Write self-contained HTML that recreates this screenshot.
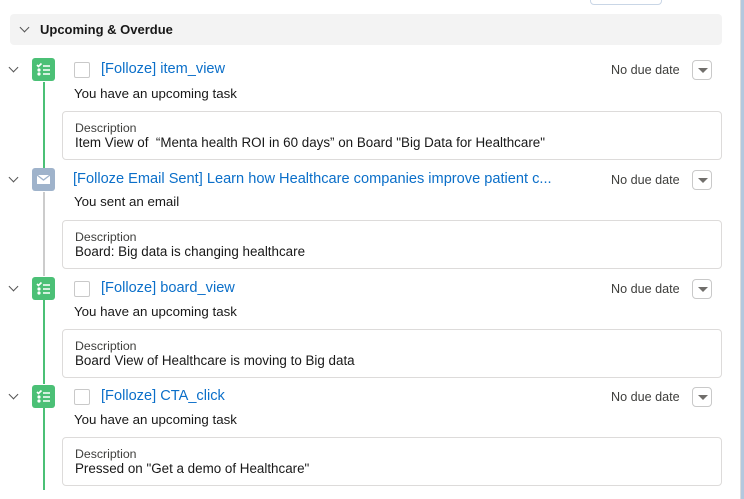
<!DOCTYPE html>
<html><head><style>
*{margin:0;padding:0;box-sizing:border-box}
body{width:744px;height:499px;background:#fff;font-family:"Liberation Sans",sans-serif;color:#181818;position:relative;overflow:hidden}
.a{position:absolute}
.hdr{left:10px;top:14px;width:712px;height:31px;background:#f3f3f3;border-radius:4px}
.hdr span{position:absolute;left:30px;top:8px;font-size:13px;font-weight:bold;color:#181818}
.chev{width:7px;height:7px;border-right:1.5px solid #555;border-bottom:1.5px solid #555;transform:rotate(45deg)}
.ico{width:23px;height:23px;border-radius:3px}
.g{background:#4bc076}.b{background:#9fb3cb}
.cb{width:16px;height:16px;border:1px solid #c9c9c9;border-radius:2px;background:#fff}
.t{font-size:14.6px;color:#0b6fc9;white-space:nowrap}
.nd{font-size:12.6px;color:#3e3e3c}
.dd{width:20px;height:20px;border:1px solid #c9c9c9;border-radius:4px;background:#fff}
.dd:after{content:"";position:absolute;left:5px;top:7px;border-left:5px solid transparent;border-right:5px solid transparent;border-top:5px solid #706e6b}
.s{font-size:13.3px;color:#181818}
.box{left:62px;width:660px;height:49px;border:1px solid #dddbda;border-radius:4px}
.box .l{position:absolute;left:12px;top:9px;font-size:12.3px;color:#3e3e3c}
.box .v{position:absolute;left:12px;top:23px;font-size:13.4px;color:#181818;white-space:nowrap}
.ln{width:2px}
</style></head><body>
<div class="a" style="left:590px;top:-6px;width:72px;height:11px;border:1px solid #c9d6e6;border-radius:4px"></div>
<div class="a" style="left:740px;top:0;width:1px;height:499px;background:#ddd"></div>
<div class="a" style="left:741px;top:0;width:3px;height:499px;background:#b4c8de"></div>
<div class="a hdr"><div class="a chev" style="left:11px;top:10px"></div><span>Upcoming &amp; Overdue</span></div>

<div class="a ln" style="left:43px;top:82px;height:86px;background:#4bc076"></div>
<div class="a ln" style="left:43px;top:192px;height:84px;background:#ccc"></div>
<div class="a ln" style="left:43px;top:300px;height:84px;background:#4bc076"></div>
<div class="a ln" style="left:43px;top:408px;height:82px;background:#4bc076"></div>

<div class="a chev" style="left:10px;top:64px"></div>
<div class="a ico g" style="left:32px;top:58px"><svg width="23" height="23"><g stroke="#fff" stroke-width="1.6" fill="none"><path d="M5 7l1.5 1.5 3-3"/><path d="M11 8h7M11 12h7M11 16h7"/><circle cx="7" cy="12" r=".8"/><circle cx="7" cy="16" r=".8"/></g></svg></div>
<div class="a cb" style="left:74px;top:62px"></div>
<div class="a t" style="left:101px;top:61px">[Folloze] item_view</div>
<div class="a nd" style="left:611px;top:63px">No due date</div>
<div class="a dd" style="left:692px;top:60px"></div>
<div class="a s" style="left:74px;top:86px">You have an upcoming task</div>
<div class="a box" style="top:111px"><div class="l">Description</div><div class="v">Item View of &nbsp;“Menta health ROI in 60 days” on Board "Big Data for Healthcare"</div></div>

<div class="a chev" style="left:10px;top:174px"></div>
<div class="a ico b" style="left:32px;top:168px"><svg width="23" height="23"><rect x="5" y="7" width="13" height="9" fill="#fff"/><path d="M5 7l6.5 5 6.5-5" stroke="#9fb3cb" stroke-width="1.3" fill="none"/></svg></div>
<div class="a t" style="left:73px;top:171px">[Folloze Email Sent] Learn how Healthcare companies improve patient c...</div>
<div class="a nd" style="left:611px;top:173px">No due date</div>
<div class="a dd" style="left:692px;top:170px"></div>
<div class="a s" style="left:74px;top:194px">You sent an email</div>
<div class="a box" style="top:220px"><div class="l">Description</div><div class="v">Board: Big data is changing healthcare</div></div>

<div class="a chev" style="left:10px;top:283px"></div>
<div class="a ico g" style="left:32px;top:277px"><svg width="23" height="23"><g stroke="#fff" stroke-width="1.6" fill="none"><path d="M5 7l1.5 1.5 3-3"/><path d="M11 8h7M11 12h7M11 16h7"/><circle cx="7" cy="12" r=".8"/><circle cx="7" cy="16" r=".8"/></g></svg></div>
<div class="a cb" style="left:74px;top:281px"></div>
<div class="a t" style="left:101px;top:280px">[Folloze] board_view</div>
<div class="a nd" style="left:611px;top:282px">No due date</div>
<div class="a dd" style="left:692px;top:279px"></div>
<div class="a s" style="left:74px;top:304px">You have an upcoming task</div>
<div class="a box" style="top:329px"><div class="l">Description</div><div class="v">Board View of Healthcare is moving to Big data</div></div>

<div class="a chev" style="left:10px;top:391px"></div>
<div class="a ico g" style="left:32px;top:385px"><svg width="23" height="23"><g stroke="#fff" stroke-width="1.6" fill="none"><path d="M5 7l1.5 1.5 3-3"/><path d="M11 8h7M11 12h7M11 16h7"/><circle cx="7" cy="12" r=".8"/><circle cx="7" cy="16" r=".8"/></g></svg></div>
<div class="a cb" style="left:74px;top:389px"></div>
<div class="a t" style="left:101px;top:388px">[Folloze] CTA_click</div>
<div class="a nd" style="left:611px;top:390px">No due date</div>
<div class="a dd" style="left:692px;top:387px"></div>
<div class="a s" style="left:74px;top:412px">You have an upcoming task</div>
<div class="a box" style="top:437px"><div class="l">Description</div><div class="v">Pressed on "Get a demo of Healthcare"</div></div>
</body></html>
